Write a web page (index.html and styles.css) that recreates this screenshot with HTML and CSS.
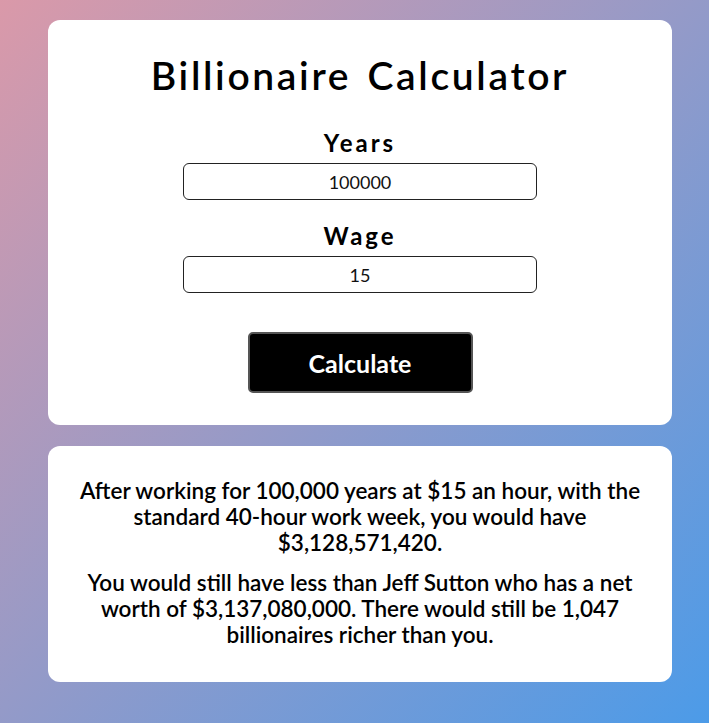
FILE: index.html
```html
<!DOCTYPE html>
<html>
<head>
<meta charset="utf-8">
<link rel="stylesheet" href="styles.css">
</head>
<body>
<main class="page">
  <section class="card calc">
    <h1 class="title">Billionaire Calculator</h1>
    <label class="label" for="years">Years</label>
    <input class="field" id="years" type="text" value="100000">
    <label class="label label-wage" for="wage">Wage</label>
    <input class="field" id="wage" type="text" value="15">
    <button class="btn">Calculate</button>
  </section>
  <section class="card result">
    <p class="para">After working for 100,000 years at $15 an hour, with the standard 40-hour work week, you would have $3,128,571,420.</p>
    <p class="para">You would still have less than Jeff Sutton who has a net worth of $3,137,080,000. There would still be 1,047 billionaires richer than you.</p>
  </section>
</main>
</body>
</html>
```
FILE: styles.css
```css
* { box-sizing: border-box; }
html, body { margin: 0; padding: 0; height: 100%; }
body {
  font-family: Lato, "Open Sans", sans-serif;
  background: linear-gradient(to bottom right, #da99a9 0%, #4c9be8 100%);
  min-height: 723px;
}
.page {
  padding: 20px 37px 0 48px;
  display: flex;
  flex-direction: column;
  gap: 21px;
}
.card {
  background: #fff;
  border-radius: 12px;
  width: 624px;
}
.calc {
  display: flex;
  flex-direction: column;
  align-items: center;
  padding: 32px 0 32px;
}
.title {
  margin: 0;
  font-size: 39px;
  font-weight: 600;
  letter-spacing: 2.65px;
  word-spacing: 4px;
  line-height: 46px;
  color: #000;
}
.label {
  margin-top: 30px;
  font-size: 24px;
  font-weight: 700;
  letter-spacing: 3px;
  line-height: 29px;
  color: #000;
}
.label-wage { margin-top: 21px; }
.field {
  margin-top: 6px;
  width: 354px;
  height: 37px;
  border: 1px solid #222;
  border-radius: 6px;
  text-align: center;
  font-family: Lato, sans-serif;
  font-size: 18px;
  color: #111;
  background: #fff;
  padding: 0;
}
.btn {
  margin-top: 39px;
  width: 225px;
  height: 61px;
  background: #000;
  color: #fff;
  border: 2px solid #555;
  border-radius: 5px;
  font-family: Lato, sans-serif;
  font-size: 25px;
  font-weight: 700;
}
.result {
  padding: 32px 28px 34px;
  text-align: center;
}
.para {
  margin: 0;
  font-size: 22.5px;
  font-weight: 600;
  line-height: 26px;
  color: #000;
}
.para + .para { margin-top: 14px; }
```
